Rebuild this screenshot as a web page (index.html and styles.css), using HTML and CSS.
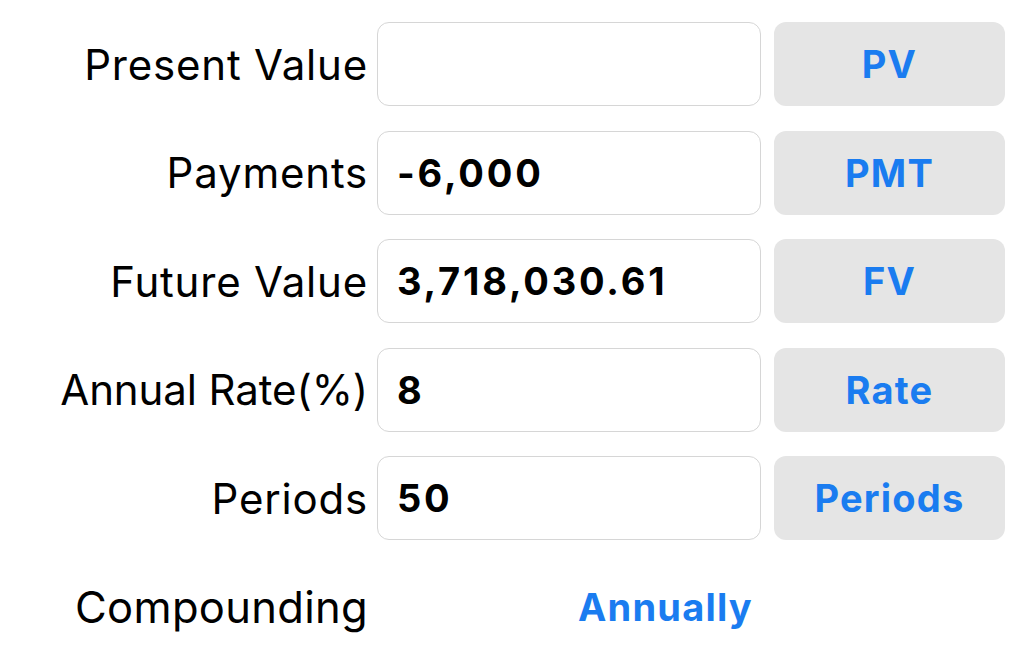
FILE: index.html
```html
<!DOCTYPE html>
<html lang="en">
<head>
<meta charset="utf-8">
<title>TVM Calculator</title>
<link rel="stylesheet" href="styles.css">
</head>
<body>
<main class="calc">
  <div class="row">
    <div class="label">Present Value</div>
    <div class="field"></div>
    <div class="btn">PV</div>
  </div>
  <div class="row">
    <div class="label">Payments</div>
    <div class="field">-6,000</div>
    <div class="btn">PMT</div>
  </div>
  <div class="row">
    <div class="label">Future Value</div>
    <div class="field">3,718,030.61</div>
    <div class="btn">FV</div>
  </div>
  <div class="row">
    <div class="label label-tight">Annual Rate(%)</div>
    <div class="field">8</div>
    <div class="btn">Rate</div>
  </div>
  <div class="row">
    <div class="label">Periods</div>
    <div class="field">50</div>
    <div class="btn">Periods</div>
  </div>
  <div class="row compounding">
    <div class="label">Compounding</div>
    <div class="picker">Annually</div>
  </div>
</main>
</body>
</html>
```

FILE: styles.css
```css
html, body {
  margin: 0;
  padding: 0;
  background: #ffffff;
  width: 1024px;
  height: 645px;
  overflow: hidden;
}

.calc {
  display: flex;
  flex-direction: column;
  gap: 24.5px;
  padding-top: 22px;
  font-family: Inter, "Liberation Sans", sans-serif;
}

.row {
  display: flex;
  align-items: center;
  height: 84px;
}

.label {
  width: 368px;
  text-align: right;
  font-size: 42px;
  color: #000;
  letter-spacing: 0.8px;
  flex: none;
}

.label-tight {
  letter-spacing: -0.1px;
}

.field {
  box-sizing: border-box;
  margin-left: 9px;
  width: 384px;
  height: 84px;
  border: 1px solid #d6d6d6;
  border-radius: 12px;
  display: flex;
  align-items: center;
  padding-left: 19px;
  font-size: 38px;
  font-weight: 700;
  letter-spacing: 2.8px;
  color: #000;
  flex: none;
}

.btn {
  margin-left: 13px;
  width: 231px;
  height: 84px;
  border-radius: 12px;
  background: #e5e5e5;
  display: flex;
  align-items: center;
  justify-content: center;
  font-size: 38px;
  font-weight: 700;
  letter-spacing: 1.2px;
  color: #1a7cf0;
  flex: none;
}

.compounding .label {
  font-size: 43.5px;
  letter-spacing: 0.3px;
}

.picker {
  margin-left: 210px;
  font-size: 38px;
  font-weight: 700;
  letter-spacing: 1.2px;
  color: #1a7cf0;
}
```
